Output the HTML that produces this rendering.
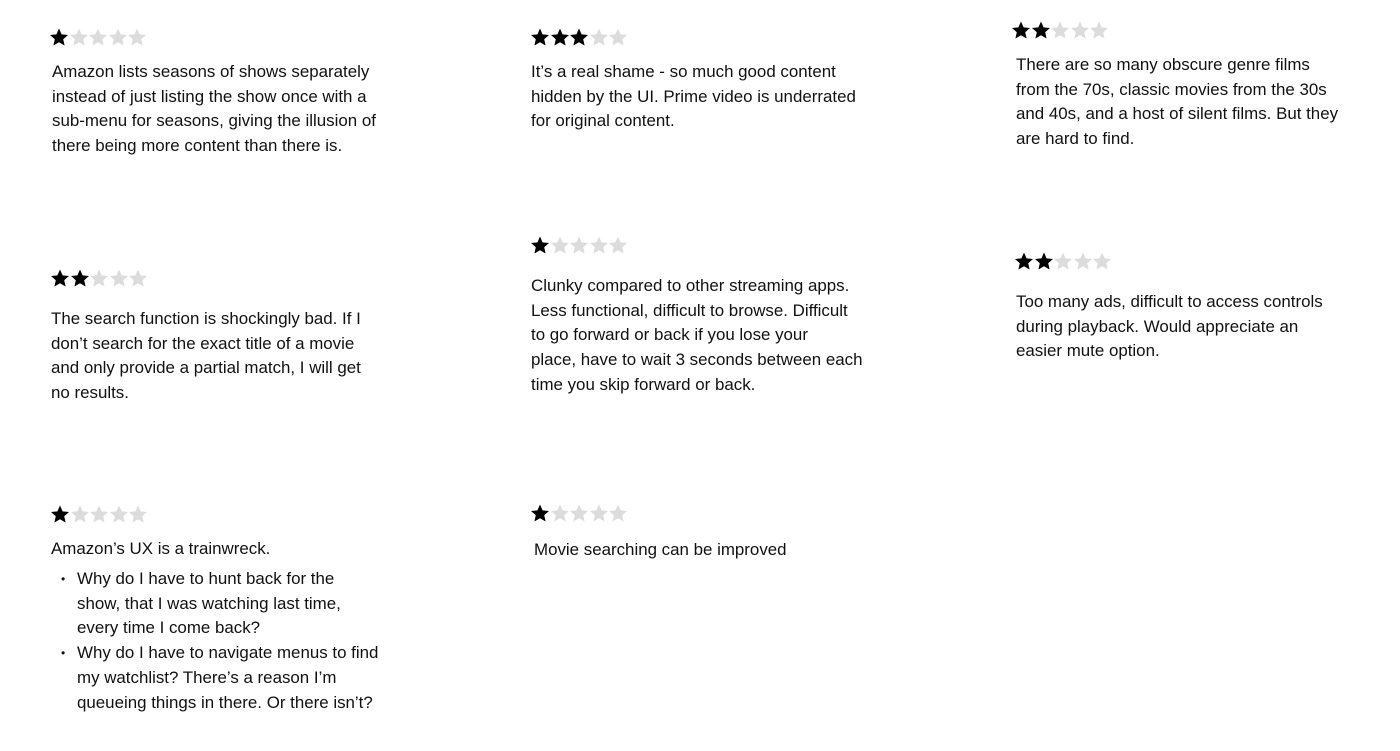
<!DOCTYPE html>
<html><head><meta charset="utf-8"><style>
html,body{margin:0;padding:0;background:#fff;width:1400px;height:751px;overflow:hidden}
body{position:relative;font-family:"Liberation Sans",sans-serif;color:#111;font-size:16.9px;line-height:24.7px}
.b{position:absolute;white-space:nowrap}
.s{position:absolute;height:20px;display:flex;gap:1.5px}
.s svg{width:18px;height:18px}
.on{fill:#000}.off{fill:#dcdcdc}
.li{position:relative;padding-left:25px}
.li:before{content:"•";position:absolute;left:9px;font-size:12px}
</style></head><body>
<svg width="0" height="0" style="position:absolute"><defs><path id="st" d="M9 0.5l2.6 5.9 6.4 0.6-4.8 4.2 1.4 6.3L9 14.2 3.4 17.5l1.4-6.3L0 7l6.4-0.6z"/></defs></svg>

<div class="s" style="left:50px;top:28px"><svg class="on"><use href="#st"/></svg><svg class="off"><use href="#st"/></svg><svg class="off"><use href="#st"/></svg><svg class="off"><use href="#st"/></svg><svg class="off"><use href="#st"/></svg></div>
<div class="b" style="left:52px;top:60px">Amazon lists seasons of shows separately<br>instead of just listing the show once with a<br>sub-menu for seasons, giving the illusion of<br>there being more content than there is.</div>

<div class="s" style="left:531px;top:28px"><svg class="on"><use href="#st"/></svg><svg class="on"><use href="#st"/></svg><svg class="on"><use href="#st"/></svg><svg class="off"><use href="#st"/></svg><svg class="off"><use href="#st"/></svg></div>
<div class="b" style="left:531px;top:60px">It’s a real shame - so much good content<br>hidden by the UI. Prime video is underrated<br>for original content.</div>

<div class="s" style="left:1012px;top:21px"><svg class="on"><use href="#st"/></svg><svg class="on"><use href="#st"/></svg><svg class="off"><use href="#st"/></svg><svg class="off"><use href="#st"/></svg><svg class="off"><use href="#st"/></svg></div>
<div class="b" style="left:1016px;top:53px">There are so many obscure genre films<br>from the 70s, classic movies from the 30s<br>and 40s, and a host of silent films. But they<br>are hard to find.</div>

<div class="s" style="left:51px;top:269px"><svg class="on"><use href="#st"/></svg><svg class="on"><use href="#st"/></svg><svg class="off"><use href="#st"/></svg><svg class="off"><use href="#st"/></svg><svg class="off"><use href="#st"/></svg></div>
<div class="b" style="left:51px;top:307px">The search function is shockingly bad. If I<br>don’t search for the exact title of a movie<br>and only provide a partial match, I will get<br>no results.</div>

<div class="s" style="left:531px;top:236px"><svg class="on"><use href="#st"/></svg><svg class="off"><use href="#st"/></svg><svg class="off"><use href="#st"/></svg><svg class="off"><use href="#st"/></svg><svg class="off"><use href="#st"/></svg></div>
<div class="b" style="left:531px;top:274px">Clunky compared to other streaming apps.<br>Less functional, difficult to browse. Difficult<br>to go forward or back if you lose your<br>place, have to wait 3 seconds between each<br>time you skip forward or back.</div>

<div class="s" style="left:1015px;top:252px"><svg class="on"><use href="#st"/></svg><svg class="on"><use href="#st"/></svg><svg class="off"><use href="#st"/></svg><svg class="off"><use href="#st"/></svg><svg class="off"><use href="#st"/></svg></div>
<div class="b" style="left:1016px;top:290px">Too many ads, difficult to access controls<br>during playback. Would appreciate an<br>easier mute option.</div>

<div class="s" style="left:51px;top:505px"><svg class="on"><use href="#st"/></svg><svg class="off"><use href="#st"/></svg><svg class="off"><use href="#st"/></svg><svg class="off"><use href="#st"/></svg><svg class="off"><use href="#st"/></svg></div>
<div class="b" style="left:51px;top:537px">Amazon’s UX is a trainwreck.</div>
<div class="b" style="left:52px;top:567px"><div class="li">Why do I have to hunt back for the<br>show, that I was watching last time,<br>every time I come back?</div><div class="li">Why do I have to navigate menus to find<br>my watchlist? There’s a reason I’m<br>queueing things in there. Or there isn’t?</div></div>

<div class="s" style="left:531px;top:504px"><svg class="on"><use href="#st"/></svg><svg class="off"><use href="#st"/></svg><svg class="off"><use href="#st"/></svg><svg class="off"><use href="#st"/></svg><svg class="off"><use href="#st"/></svg></div>
<div class="b" style="left:534px;top:538px">Movie searching can be improved</div>
</body></html>
